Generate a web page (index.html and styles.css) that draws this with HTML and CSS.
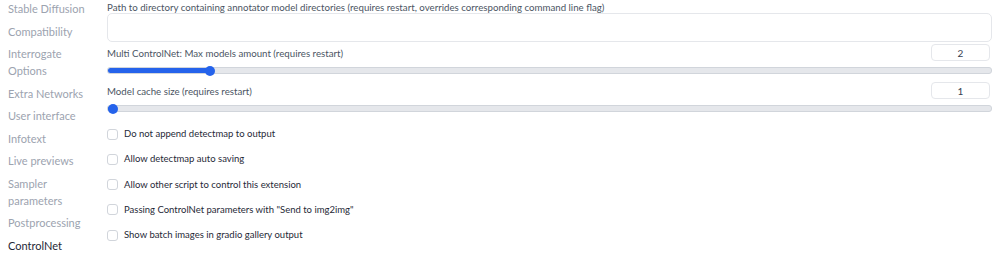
FILE: index.html
```html
<!doctype html>
<html lang="en">
  <head>
    <meta charset="UTF-8" />
    <title>Settings - ControlNet</title>
    <link rel="stylesheet" href="styles.css">
  </head>
  <body>
    <div class="settings">
      <div class="tabs">
        <div class="tab">Stable Diffusion</div>
        <div class="tab">Compatibility</div>
        <div class="tab">Interrogate Options</div>
        <div class="tab">Extra Networks</div>
        <div class="tab">User interface</div>
        <div class="tab">Infotext</div>
        <div class="tab">Live previews</div>
        <div class="tab">Sampler parameters</div>
        <div class="tab">Postprocessing</div>
        <div class="tab selected">ControlNet</div>
      </div>

      <div class="panel">
        <label class="field">
          <span class="label">Path to directory containing annotator model directories (requires restart, overrides corresponding command line flag)</span>
          <input class="textbox" type="text" />
        </label>

        <div class="field slider-field">
          <div class="slider-head">
            <span class="label">Multi ControlNet: Max models amount (requires restart)</span>
            <input class="number" type="number" value="2" />
          </div>
          <div class="track">
            <div class="fill" style="width: calc(5px + 11.1% - 1.1px)"></div>
            <div class="thumb" style="left: calc(11.1% - 1.1px)"></div>
          </div>
        </div>

        <div class="field slider-field">
          <div class="slider-head">
            <span class="label">Model cache size (requires restart)</span>
            <input class="number" type="number" value="1" />
          </div>
          <div class="track">
            <div class="fill" style="width: 5px"></div>
            <div class="thumb" style="left: 0"></div>
          </div>
        </div>

        <div class="checks">
          <label class="check"><span class="box"></span>Do not append detectmap to output</label>
          <label class="check"><span class="box"></span>Allow detectmap auto saving</label>
          <label class="check"><span class="box"></span>Allow other script to control this extension</label>
          <label class="check"><span class="box"></span>Passing ControlNet parameters with "Send to img2img"</label>
          <label class="check"><span class="box"></span>Show batch images in gradio gallery output</label>
        </div>
      </div>
    </div>
  </body>
</html>
```

FILE: styles.css
```css
body {
  margin: 0;
  background: #fff;
  font-family: Lato, "Noto Sans", sans-serif;
  color: #374151;
}
.settings {
  display: flex;
}
.tabs {
  width: 92px;
  padding: 0 0 0 8px;
  display: flex;
  flex-direction: column;
}
.tab {
  font-size: 11px;
  line-height: 17px;
  padding: 0 0 5.5px 0;
  color: #9ca3af;
}
.tab.selected {
  color: #1f2937;
}
.panel {
  flex: 1;
  padding: 0 8px 0 7px;
  display: flex;
  flex-direction: column;
}
.label {
  font-size: 9.7px;
  line-height: 12px;
  color: #4b5563;
}
.field {
  display: flex;
  flex-direction: column;
}
.field > .label {
  padding-top: 1px;
}
.textbox {
  margin: 0;
  height: 29px;
  box-sizing: border-box;
  border: 1px solid #e5e7eb;
  border-radius: 5px;
  background: #fff;
}
.slider-field {
  margin-top: 1px;
}
.slider-field:nth-child(2) {
  margin-top: 2px;
}
.slider-head {
  display: flex;
  justify-content: space-between;
  align-items: flex-start;
}
.slider-head .label {
  padding-top: 3px;
}
.number {
  width: 59px;
  height: 17px;
  box-sizing: border-box;
  border: 1px solid #e5e7eb;
  border-radius: 4px;
  margin-right: 2px;
  text-align: center;
  font-family: inherit;
  font-size: 10px;
  color: #374151;
  -moz-appearance: textfield;
}
.number::-webkit-inner-spin-button {
  -webkit-appearance: none;
}
.track {
  position: relative;
  height: 5px;
  margin: 6px 0 7px 0;
  background: #e5e7eb;
  border: 1px solid #d1d5db;
  border-radius: 3px;
}
.fill {
  height: 100%;
  background: #2563eb;
  border-radius: 3px;
}
.thumb {
  position: absolute;
  top: 50%;
  width: 10px;
  height: 10px;
  margin-top: -5px;
  border-radius: 50%;
  background: #2563eb;
}
.checks {
  display: flex;
  flex-direction: column;
  padding-top: 8px;
  gap: 11.25px;
}
.check {
  display: flex;
  align-items: center;
  gap: 6px;
  font-size: 9.5px;
  line-height: 14px;
  color: #1f2937;
}
.box {
  width: 11px;
  height: 11px;
  box-sizing: border-box;
  border: 1px solid #d1d5db;
  border-radius: 3px;
  background: #fff;
}
```
